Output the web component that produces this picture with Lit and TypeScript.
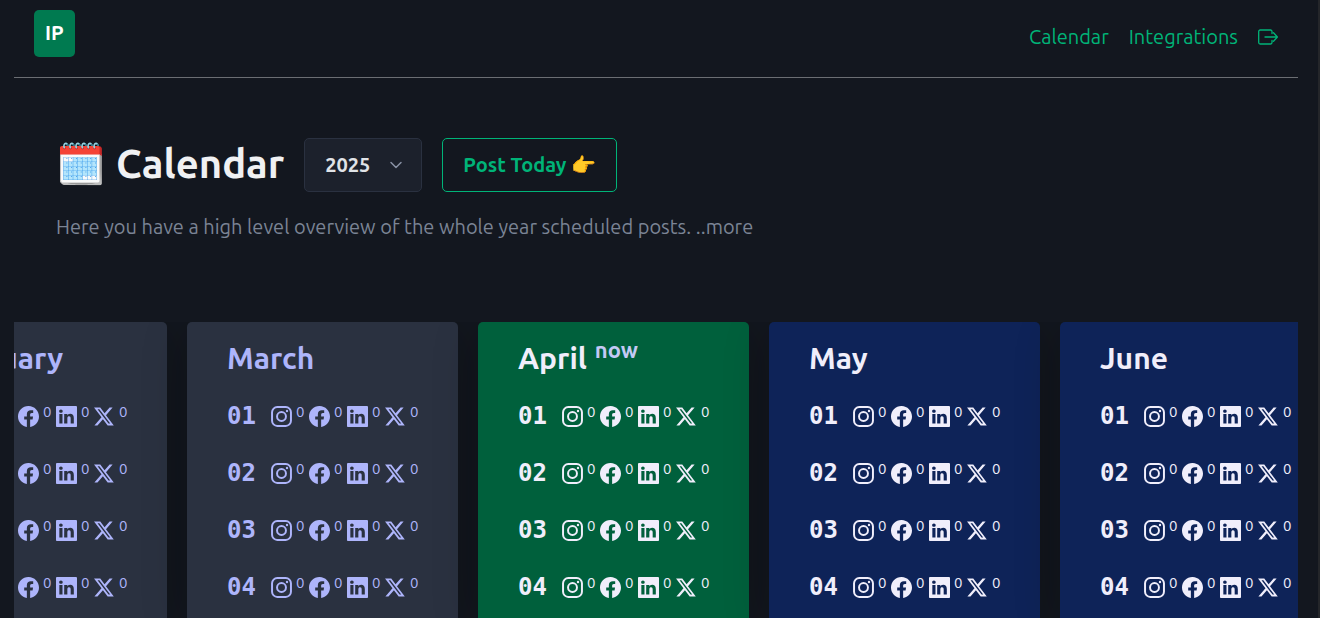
import { LitElement, html, css, svg } from "lit";
import { customElement, property, state } from "lit/decorators.js";
import { classMap } from "lit/directives/class-map.js";

const NETWORKS = [
  {
    name: "Instagram",
    box: "0 0 16 16",
    art: svg`<rect x="0.8" y="0.8" width="14.4" height="14.4" rx="4" fill="none" stroke="currentColor" stroke-width="1.5"/><circle cx="8" cy="8" r="3.4" fill="none" stroke="currentColor" stroke-width="1.5"/><circle cx="12.2" cy="3.8" r="0.9"/>`,
  },
  {
    name: "Facebook",
    box: "0 0 16 16",
    art: svg`<path d="M16 8.049c0-4.446-3.582-8.05-8-8.05C3.58 0-.002 3.603-.002 8.05c0 4.017 2.926 7.347 6.75 7.951v-5.625h-2.03V8.05H6.75V6.275c0-2.017 1.195-3.131 3.022-3.131.876 0 1.791.157 1.791.157v1.98h-1.009c-.993 0-1.303.621-1.303 1.258v1.51h2.218l-.354 2.326H9.25V16c3.824-.604 6.75-3.934 6.75-7.951"/>`,
  },
  {
    name: "LinkedIn",
    box: "0 0 16 16",
    art: svg`<path d="M0 .8C0 .4.4 0 .8 0h14.4c.4 0 .8.4.8.8v14.4c0 .4-.4.8-.8.8H.8c-.4 0-.8-.4-.8-.8zm4.943 12.594V6.169H2.542v7.225zm-1.2-8.212c.837 0 1.358-.554 1.358-1.248-.015-.709-.52-1.248-1.342-1.248S2.4 3.226 2.4 3.934c0 .694.521 1.248 1.327 1.248zm4.908 8.212V9.359c0-.216.016-.432.08-.586.173-.431.568-.878 1.232-.878.869 0 1.216.662 1.216 1.634v3.865h2.401V9.25c0-2.22-1.184-3.252-2.764-3.252-1.274 0-1.845.7-2.165 1.193v.025h-.016l.016-.025V6.169h-2.4c.03.678 0 7.225 0 7.225z"/>`,
  },
  {
    name: "X",
    box: "2.1 1.5 21 21",
    art: svg`<path d="M17.6874 3.0625L12.6907 8.77425L8.37045 3.0625H2.11328L9.58961 12.8387L2.50378 20.9375H5.53795L11.0068 14.6886L15.7863 20.9375H21.8885L14.095 10.6342L20.7198 3.0625H17.6874ZM16.6232 19.1225L5.65436 4.78217H7.45745L18.3034 19.1225H16.6232Z"/>`,
  },
];

const MONTHS = [
  { name: "February", phase: "past" },
  { name: "March", phase: "past" },
  { name: "April", phase: "now" },
  { name: "May", phase: "future" },
  { name: "June", phase: "future" },
];

@customElement("month-card")
class MonthCard extends LitElement {
  @property() name = "";
  @property() phase = "future";
  @property({ type: Number }) days = 4;

  static styles = css`
    :host {
      display: block;
      flex: none;
      width: 271px;
    }
    .card {
      box-sizing: border-box;
      height: 100%;
      padding: 20px 20px 0 40px;
      border-radius: 5px 5px 0 0;
      box-shadow: 0 8px 48px rgba(7, 9, 12, 0.2);
      background: #0e2358;
      color: #f0eefb;
    }
    .past {
      background: #2a3140;
      color: #aeb5fb;
    }
    .now {
      background: #00603c;
    }
    h2 {
      display: flex;
      align-items: flex-start;
      gap: 8px;
      margin: 0 0 14px;
      font-size: 30px;
      line-height: 32px;
      font-weight: 600;
    }
    .tag {
      color: #c3c9f5;
      font-size: 22px;
      line-height: 16px;
    }
    ul {
      margin: 0;
      padding: 0;
      list-style: none;
    }
    .day {
      display: flex;
      align-items: center;
      height: 57px;
    }
    .number {
      width: 44px;
      font-family: "DejaVu Sans Mono", monospace;
      font-size: 24px;
      line-height: 29px;
      font-weight: 700;
    }
    .network {
      display: flex;
      align-items: center;
      gap: 4px;
      width: 38px;
    }
    svg {
      flex: none;
      width: 21px;
      height: 21px;
      fill: currentColor;
    }
    .count {
      align-self: flex-start;
      font-size: 15px;
      line-height: 12px;
      font-weight: 400;
    }
  `;

  render() {
    const list = Array.from({ length: this.days }, (_, i) => String(i + 1).padStart(2, "0"));
    return html`
      <article class=${classMap({ card: true, past: this.phase === "past", now: this.phase === "now" })}>
        <h2>${this.name}${this.phase === "now" ? html`<span class="tag">now</span>` : ""}</h2>
        <ul>
          ${list.map(
            (day) => html`<li class="day">
              <span class="number">${day}</span>
              ${NETWORKS.map(
                (n) => html`<span class="network"><svg viewBox=${n.box} role="img" aria-label=${n.name}>${n.art}</svg><span class="count">0</span></span>`
              )}
            </li>`
          )}
        </ul>
      </article>
    `;
  }
}

@customElement("app-root")
class AppRoot extends LitElement {
  @state() year = 2025;

  static styles = css`
    :host {
      display: flex;
      flex-direction: column;
      box-sizing: border-box;
      height: 100vh;
      overflow: hidden;
      padding: 0 20px 0 14px;
      border-right: 2px solid #24262a;
      background: #13171f;
      color: #f0f1f3;
      font-family: Ubuntu, "Open Sans", "Noto Sans", sans-serif;
      font-size: 20px;
      line-height: 30px;
    }
    header {
      display: flex;
      flex: none;
      align-items: center;
      justify-content: space-between;
      height: 77px;
      padding: 0 20px;
      border-bottom: 1px solid #6b6e73;
    }
    .logo {
      margin-bottom: 10px;
      padding: 8px 11px 9px;
      border-radius: 5px;
      background: #007a50;
      color: #fff;
      font-weight: 600;
      text-decoration: none;
    }
    nav {
      display: flex;
      align-items: center;
      gap: 20px;
      margin-bottom: 4px;
    }
    nav a {
      color: #00b478;
      text-decoration: none;
    }
    nav svg {
      display: block;
      width: 20px;
      height: 16px;
      fill: none;
      stroke: currentColor;
      stroke-width: 1.3;
      stroke-linecap: round;
      stroke-linejoin: round;
    }
    main {
      display: flex;
      flex: 1;
      flex-direction: column;
    }
    .intro {
      padding: 60px 42px 80px;
    }
    .bar {
      display: flex;
      align-items: center;
      gap: 20px;
    }
    h1 {
      display: flex;
      align-items: center;
      gap: 10px;
      margin: 0;
      padding-bottom: 2px;
      font-size: 40px;
      line-height: 50px;
      font-weight: 600;
    }
    .select {
      display: grid;
      align-items: center;
      width: 118px;
    }
    .select > * {
      grid-area: 1 / 1;
    }
    select {
      appearance: none;
      box-sizing: border-box;
      width: 100%;
      height: 54px;
      padding: 0 20px;
      border: 1px solid #2a3140;
      border-radius: 5px;
      background: #1c212c;
      color: #e0e3e7;
      font: inherit;
      font-weight: 600;
    }
    .chevron {
      justify-self: end;
      width: 14px;
      height: 8px;
      margin-right: 19px;
      fill: none;
      stroke: #8891a4;
      stroke-width: 1.5;
      stroke-linecap: round;
      stroke-linejoin: round;
      pointer-events: none;
    }
    button {
      height: 54px;
      padding: 0 20px;
      border: 1px solid #00b478;
      border-radius: 5px;
      background: transparent;
      color: #00b478;
      font: inherit;
      font-weight: 600;
      white-space: nowrap;
    }
    p {
      margin: 20px 0 0;
      color: #7b8495;
    }
    .months {
      display: flex;
      flex: 1;
      overflow: hidden;
    }
    .track {
      display: flex;
      gap: 20px;
      margin-left: -118px;
    }
  `;

  render() {
    return html`
      <header>
        <a class="logo" href="#">IP</a>
        <nav>
          <a href="#calendar">Calendar</a>
          <a href="#integrations">Integrations</a>
          <a href="#logout" aria-label="Log out">
            <svg viewBox="0 0 20 16"><path d="M14 4.5V2.5A1.5 1.5 0 0 0 12.5 1H2.2A1.5 1.5 0 0 0 .7 2.5v11A1.5 1.5 0 0 0 2.2 15h10.3a1.5 1.5 0 0 0 1.5-1.5v-2M7 8h12.2M15.5 3.7 19.4 8l-3.9 4.3"/></svg>
          </a>
        </nav>
      </header>
      <main>
        <section class="intro">
          <div class="bar">
            <h1><span>🗓️</span><span>Calendar</span></h1>
            <div class="select">
              <select aria-label="Year"><option>${this.year}</option></select>
              <svg class="chevron" viewBox="0 0 14 8"><path d="M2 1.5 7 6.5l5-5"/></svg>
            </div>
            <button type="button">Post Today 👉</button>
          </div>
          <p>Here you have a high level overview of the whole year scheduled posts. ..more</p>
        </section>
        <section class="months" aria-label="Months">
          <div class="track">
            ${MONTHS.map((m) => html`<month-card .name=${m.name} .phase=${m.phase}></month-card>`)}
          </div>
        </section>
      </main>
    `;
  }
}
